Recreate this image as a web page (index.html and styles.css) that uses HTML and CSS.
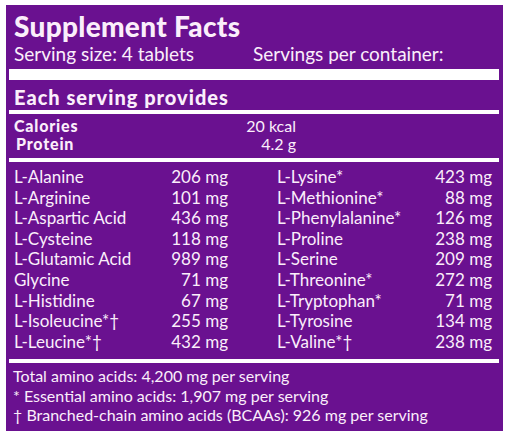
FILE: index.html
```html
<!DOCTYPE html>
<html lang="en">
<head>
    <meta charset="UTF-8">
    <title>Supplement Facts</title>
    <link rel="stylesheet" href="styles.css">
</head>
<body>
    <div class="label">
        <!-- Заголовок -->
        <h1 class="title">Supplement Facts</h1>
        <div class="serving">
            <span class="serving-size">Serving size: 4 tablets</span>
            <span>Servings per container:</span>
        </div>
        <div class="bar thick"></div>

        <h2 class="provides">Each serving provides</h2>
        <div class="bar"></div>

        <!-- Калории и белок -->
        <div class="energy">
            <span class="energy-name">Calories</span><span class="energy-value">20 kcal</span>
            <span class="energy-name protein">Protein</span><span class="energy-value">4.2 g</span>
        </div>
        <div class="bar"></div>

        <!-- Аминокислоты -->
        <div class="amino">
            <span>L-Alanine</span><span class="val">206 mg</span>
            <span class="right">L-Lysine*</span><span class="val">423 mg</span>

            <span>L-Arginine</span><span class="val">101 mg</span>
            <span class="right">L-Methionine*</span><span class="val">88 mg</span>

            <span>L-Aspartic Acid</span><span class="val">436 mg</span>
            <span class="right">L-Phenylalanine*</span><span class="val">126 mg</span>

            <span>L-Cysteine</span><span class="val">118 mg</span>
            <span class="right">L-Proline</span><span class="val">238 mg</span>

            <span>L-Glutamic Acid</span><span class="val">989 mg</span>
            <span class="right">L-Serine</span><span class="val">209 mg</span>

            <span>Glycine</span><span class="val">71 mg</span>
            <span class="right">L-Threonine*</span><span class="val">272 mg</span>

            <span>L-Histidine</span><span class="val">67 mg</span>
            <span class="right">L-Tryptophan*</span><span class="val">71 mg</span>

            <span>L-Isoleucine*†</span><span class="val">255 mg</span>
            <span class="right">L-Tyrosine</span><span class="val">134 mg</span>

            <span>L-Leucine*†</span><span class="val">432 mg</span>
            <span class="right">L-Valine*†</span><span class="val">238 mg</span>
        </div>
        <div class="bar"></div>

        <!-- Примечания -->
        <div class="notes">
            <p>Total amino acids: 4,200 mg per serving</p>
            <p>* Essential amino acids: 1,907 mg per serving</p>
            <p>† Branched-chain amino acids (BCAAs): 926 mg per serving</p>
        </div>
    </div>
</body>
</html>
```

FILE: styles.css
```css
* {
    box-sizing: border-box;
    margin: 0;
    padding: 0;
}

body {
    font-family: 'Lato', 'Open Sans', sans-serif;
    background-color: #fff;
    color: #fbeefb;
}

.label {
    margin: 5px 0 0 6px;
    width: 497px;
    height: 426px;
    padding: 0 4px 0 3px;
    background-color: #6a1190;
}

.title {
    padding: 6px 0 0 5px;
    font-size: 28px;
    font-weight: 900;
    letter-spacing: 0.3px;
    line-height: 30px;
}

.serving {
    display: flex;
    padding: 2px 0 0 5px;
    font-size: 19px;
    line-height: 22px;
}

.serving-size {
    width: 239px;
}

.bar {
    height: 4px;
    background-color: #fff;
}

.bar.thick {
    height: 11px;
    margin-top: 4px;
}

.provides {
    padding: 4px 0 0 5px;
    font-size: 20px;
    font-weight: 900;
    letter-spacing: 1px;
    line-height: 26px;
}

.energy {
    display: grid;
    grid-template-columns: 200px 82px;
    padding: 3px 0 5px 5px;
    font-size: 16px;
    line-height: 18px;
}

.energy-name {
    font-weight: 900;
    letter-spacing: 0.8px;
}

.energy-name.protein {
    padding-left: 2px;
}

.energy-value {
    text-align: right;
}

.amino {
    display: grid;
    grid-template-columns: 140px 74px 49px 140px 75px;
    padding: 5px 0 7px 5px;
    font-size: 17px;
    line-height: 20.6px;
}

.amino .val {
    text-align: right;
}

.amino .right {
    grid-column: 4;
}

.notes {
    padding: 3px 0 0 4px;
    font-size: 16px;
    line-height: 19.5px;
}
```
